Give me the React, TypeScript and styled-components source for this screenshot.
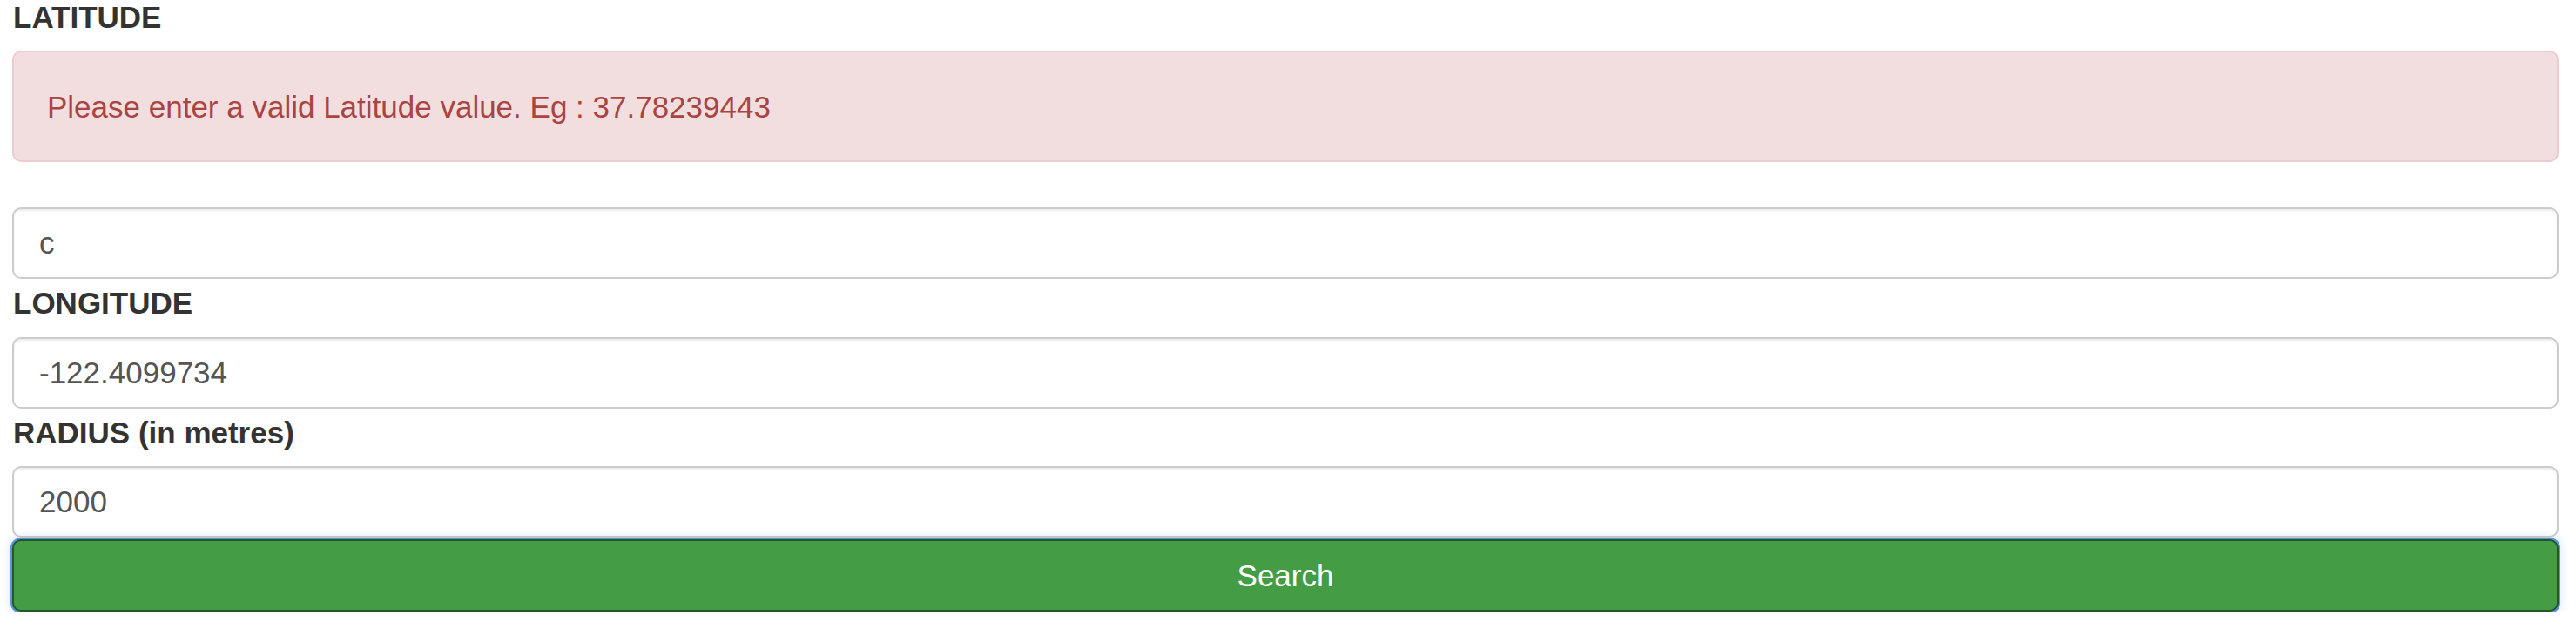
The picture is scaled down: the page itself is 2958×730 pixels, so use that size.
import React from "react";
import styled, { createGlobalStyle } from "styled-components";

const GlobalStyle = createGlobalStyle`
  html, body {
    margin: 0;
    padding: 0;
    background: #ffffff;
    overflow: hidden;
  }
  body {
    font-family: "Liberation Sans", Arial, sans-serif;
    font-size: 35px;
    line-height: 1.42857;
    color: #333333;
  }
  * { box-sizing: border-box; }
`;

const Form = styled.form`
  display: flex;
  flex-direction: column;
  padding: 0 20px 0 14px;
`;

const Label = styled.label<{ $first?: boolean }>`
  display: block;
  font-weight: 700;
  font-size: 35px;
  line-height: 49.4px;
  color: #333333;
  margin-top: ${(p) => (p.$first ? "-5px" : "3px")};
  margin-bottom: 14px;
  padding-left: 1px;
`;

const Alert = styled.div`
  height: 128px;
  display: flex;
  align-items: center;
  padding: 2px 38px 0;
  background: #f2dede;
  border: 2px solid #ebccd1;
  border-radius: 10px;
  color: #a94442;
  font-size: 35px;
  margin-bottom: 52px;
`;

const Input = styled.input`
  display: block;
  width: 100%;
  height: 82px;
  padding: 0 29px;
  font-family: "Liberation Sans", Arial, sans-serif;
  font-size: 35px;
  color: #555555;
  background: #ffffff;
  border: 2px solid #cccccc;
  border-radius: 10px;
  box-shadow: inset 0 2px 2px rgba(0, 0, 0, 0.075);
  outline: none;
`;

const SubmitButton = styled.button`
  display: block;
  width: 100%;
  height: 83px;
  margin-top: 2px;
  font-family: "Liberation Sans", Arial, sans-serif;
  font-size: 35px;
  color: #ffffff;
  background: #449d44;
  border: 2px solid #255625;
  border-radius: 10px;
  box-shadow: 0 0 0 2px #5a92e4, 0 0 10px 4px rgba(90, 146, 228, 0.18);
  cursor: pointer;
`;

export default function App() {
  return (
    <>
      <GlobalStyle />
      <Form onSubmit={(e) => e.preventDefault()}>
        <Label $first>LATITUDE</Label>
        <Alert>Please enter a valid Latitude value. Eg : 37.78239443</Alert>
        <Input type="text" defaultValue="c" />
        <Label>LONGITUDE</Label>
        <Input type="text" defaultValue="-122.4099734" />
        <Label>RADIUS (in metres)</Label>
        <Input type="text" defaultValue="2000" />
        <SubmitButton type="submit">Search</SubmitButton>
      </Form>
    </>
  );
}
